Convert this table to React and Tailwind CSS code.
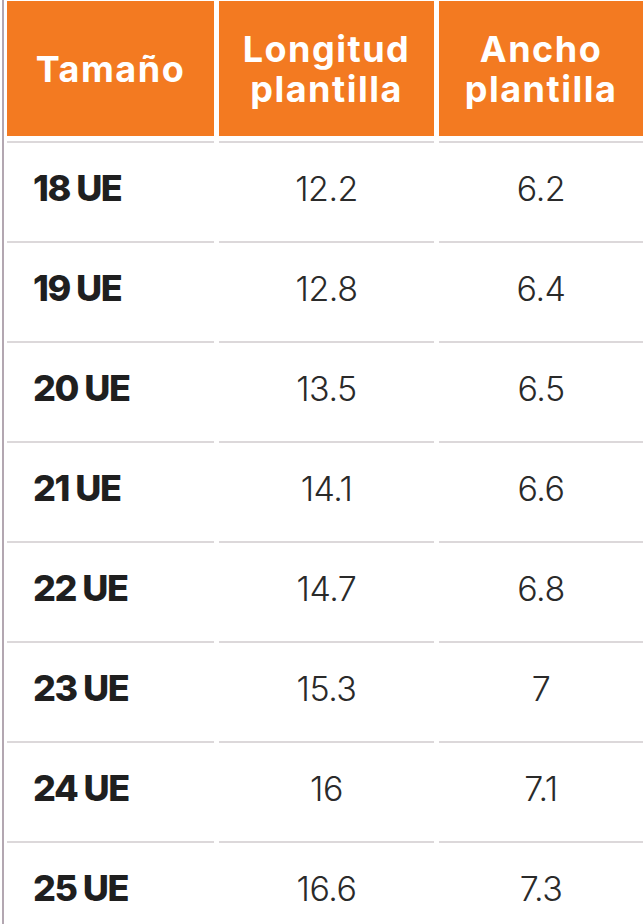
const rows = [
  ['18 UE', '12.2', '6.2'],
  ['19 UE', '12.8', '6.4'],
  ['20 UE', '13.5', '6.5'],
  ['21 UE', '14.1', '6.6'],
  ['22 UE', '14.7', '6.8'],
  ['23 UE', '15.3', '7'],
  ['24 UE', '16', '7.1'],
  ['25 UE', '16.6', '7.3'],
]

const font = { fontFamily: 'Inter, "Open Sans", sans-serif' }

export default function App() {
  return (
    <div className="flex h-[924px] w-[643px] overflow-hidden bg-white" style={font}>
      <div className="ml-[2px] h-full w-[2px] shrink-0 bg-[#b3a7b1]" />
      <div className="ml-[3px] grid shrink-0 grid-cols-[207px_215px_204px] content-start gap-x-[5px] pt-px">
        <div className="flex h-[135px] items-center justify-center bg-[#f37a21] text-[36px] font-bold leading-[40px] tracking-[1.5px] text-white">
          Tamaño
        </div>
        <div className="flex h-[135px] flex-col items-center justify-center bg-[#f37a21] text-center text-[36px] font-bold leading-[40px] tracking-[1.5px] text-white">
          <span>Longitud</span>
          <span>plantilla</span>
        </div>
        <div className="flex h-[135px] flex-col items-center justify-center bg-[#f37a21] text-center text-[36px] font-bold leading-[40px] tracking-[1.5px] text-white">
          <span>Ancho</span>
          <span>plantilla</span>
        </div>
        <div className="col-span-3 h-[5px]" />
        {rows.map(([size, length, width]) => (
          <div key={size} className="contents">
            <div className="flex h-[100px] items-center border-t-2 border-[#dcd8da] pb-2 pl-[26px] text-[36px] font-extrabold tracking-[-1.5px] text-[#1f1f1f]">
              {size}
            </div>
            <div className="flex h-[100px] items-center justify-center border-t-2 border-[#dcd8da] pb-2 text-[34px] font-light tracking-[-0.5px] text-[#2a2a2a]">
              {length}
            </div>
            <div className="flex h-[100px] items-center justify-center border-t-2 border-[#dcd8da] pb-2 text-[34px] font-light tracking-[-0.5px] text-[#2a2a2a]">
              {width}
            </div>
          </div>
        ))}
      </div>
    </div>
  )
}
